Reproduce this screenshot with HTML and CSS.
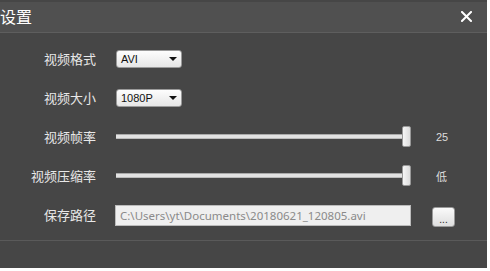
FILE: index.html
```html
<!DOCTYPE html>
<html lang="zh-CN">
<head>
    <meta charset="UTF-8">
    <title>设置</title>
    <link rel="stylesheet" href="styles.css">
</head>
<body>
    <div class="window">
        <div class="title-bar">
            <span class="title">设置</span>
            <svg class="close" width="11" height="11" viewBox="0 0 11 11">
                <path d="M1 1 L10 10 M10 1 L1 10" stroke="#fff" stroke-width="2" stroke-linecap="square"/>
            </svg>
        </div>

        <div class="content">
            <div class="label">视频格式</div>
            <div class="combo"><span>AVI</span><i class="arrow"></i></div>
            <div></div>

            <div class="label">视频大小</div>
            <div class="combo"><span>1080P</span><i class="arrow"></i></div>
            <div></div>

            <div class="label">视频帧率</div>
            <div class="slider"><div class="track"></div><div class="handle"></div></div>
            <div class="value">25</div>

            <div class="label">视频压缩率</div>
            <div class="slider"><div class="track"></div><div class="handle"></div></div>
            <div class="value">低</div>

            <div class="label">保存路径</div>
            <div class="path">C:\Users\yt\Documents\20180621_120805.avi</div>
            <div class="browse-cell"><button class="browse">...</button></div>
        </div>

        <div class="footer"></div>
    </div>
</body>
</html>
```

FILE: styles.css
```css
body {
    margin: 0;
    background: #fff;
    font-family: "Noto Sans CJK SC", "Liberation Sans", sans-serif;
}

.window {
    width: 487px;
    height: 268px;
    background: #464646;
    display: flex;
    flex-direction: column;
}

.title-bar {
    height: 30px;
    margin-top: 2px;
    background: #505050;
    border-bottom: 1px solid #5e5e5e;
    display: flex;
    align-items: center;
    justify-content: space-between;
    color: #fff;
}

.title {
    font-size: 16px;
    line-height: 16px;
    margin-top: -2px;
}

.close {
    margin-right: 15px;
    margin-top: -2px;
}

.content {
    height: 208px;
    box-sizing: border-box;
    padding-top: 6px;
    display: grid;
    grid-template-columns: 96px 295px 40px;
    grid-auto-rows: 39px;
    column-gap: 20px;
    align-items: center;
    border-bottom: 1px solid #5a5a5a;
}

.label {
    text-align: right;
    color: #e8e8e8;
    font-size: 13px;
}

.combo {
    width: 66px;
    height: 18px;
    box-sizing: border-box;
    border: 1px solid #9a9a9a;
    border-radius: 3px;
    background: linear-gradient(#fdfdfd, #e6e6e6);
    display: flex;
    align-items: center;
    justify-content: space-between;
    padding: 0 4px 0 4px;
    font-family: "Liberation Sans", sans-serif;
    font-size: 11px;
    color: #111;
}

.arrow {
    width: 0;
    height: 0;
    border-left: 4px solid transparent;
    border-right: 4px solid transparent;
    border-top: 4px solid #111;
}

.slider {
    position: relative;
    height: 22px;
    display: flex;
    align-items: center;
}

.track {
    width: 100%;
    height: 3px;
    background: #e2e2e2;
    border-top: 1px solid #aaa;
    border-bottom: 1px solid #bbb;
}

.handle {
    position: absolute;
    right: 0;
    top: 0;
    width: 9px;
    height: 21px;
    box-sizing: border-box;
    border: 1px solid #999;
    border-radius: 2px;
    background: linear-gradient(90deg, #f6f6f6, #dcdcdc);
}

.value {
    color: #ddd;
    font-size: 11px;
    padding-left: 5px;
    font-family: "Liberation Sans", "Noto Sans CJK SC", sans-serif;
}

.browse-cell {
    margin-top: 2px;
}

.path {
    height: 21px;
    margin-top: 2px;
    margin-left: -1px;
    box-sizing: border-box;
    border: 1px solid #bbb;
    background: #efefef;
    color: #8a8a8a;
    font-family: "Noto Sans", "Liberation Sans", sans-serif;
    font-size: 11.5px;
    line-height: 19px;
    padding-left: 4px;
}

.browse {
    width: 23px;
    height: 20px;
    border: 1px solid #999;
    border-radius: 3px;
    background: linear-gradient(#fafafa, #dedede);
    font-size: 10px;
    line-height: 10px;
    padding: 6px 0 0;
    color: #222;
    margin-left: 1px;
}

.footer {
    flex: 1;
    background: #464646;
}
```
